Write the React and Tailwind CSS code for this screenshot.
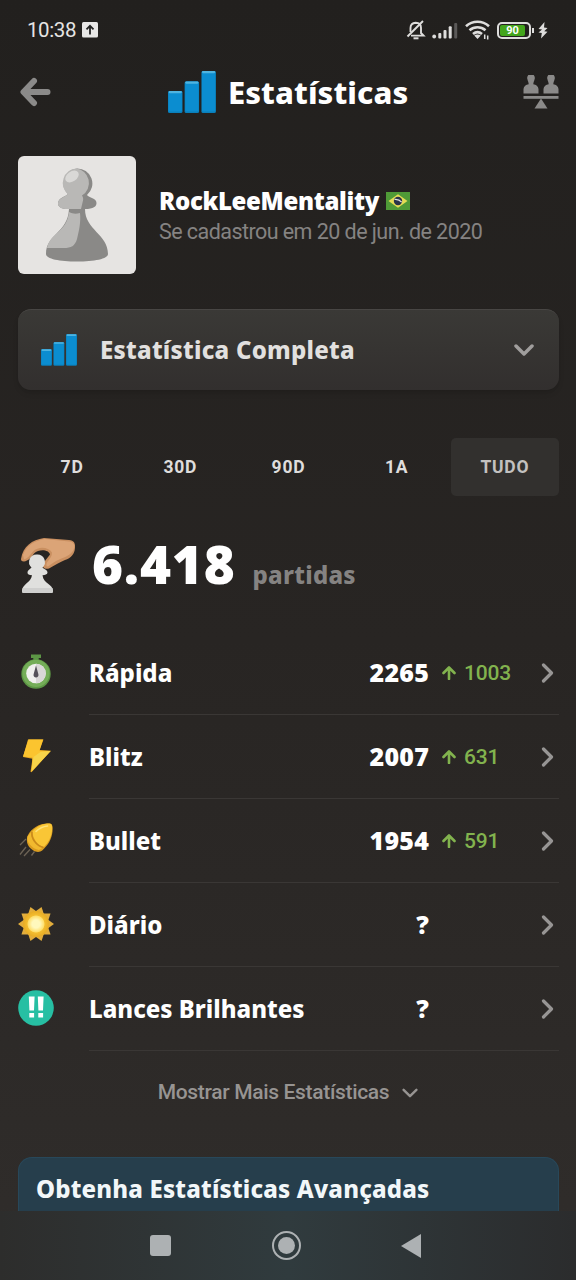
import React from 'react';

const PERIODS = ['7D', '30D', '90D', '1A', 'TUDO'];

const BarsIcon = ({ className }) => (
  <svg className={className} viewBox="0 0 48 42" fill="none">
    <rect x="0" y="20" width="14.5" height="22" rx="1.6" fill="#0a7fba" />
    <rect x="0.6" y="20" width="13.3" height="20.5" rx="1.3" fill="#0b8dd0" />
    <rect x="0.6" y="20" width="13.3" height="2.2" rx="1.1" fill="#4fb4e0" />
    <rect x="16.6" y="10.5" width="14.5" height="31.5" rx="1.6" fill="#0a7fba" />
    <rect x="17.2" y="10.5" width="13.3" height="30" rx="1.3" fill="#0b8dd0" />
    <rect x="17.2" y="10.5" width="13.3" height="2.2" rx="1.1" fill="#4fb4e0" />
    <rect x="33.4" y="0" width="14.5" height="42" rx="1.6" fill="#0a7fba" />
    <rect x="34" y="0" width="13.3" height="40.5" rx="1.3" fill="#0b8dd0" />
    <rect x="34" y="0" width="13.3" height="2.2" rx="1.1" fill="#4fb4e0" />
  </svg>
);

const RapidIcon = () => (
  <svg className="h-9 w-9" viewBox="0 0 36 36">
    <path d="M13 0.5h10v3.4h-2.3V7h-5.4V3.9H13z" fill="#5c9645" />
    <circle cx="18" cy="20" r="14.7" fill="#5c9645" />
    <circle cx="18" cy="19.3" r="13.6" fill="#74ad58" />
    <circle cx="18" cy="19.5" r="9.8" fill="#f0f0ee" />
    <path d="M18 9.7a9.8 9.8 0 0 1 0 19.6z" fill="#d9d7d7" />
    <path d="M18 11.5l2.4 8.8a2.5 2.5 0 1 1-4.8 0z" fill="#55515a" />
  </svg>
);

const BlitzIcon = () => (
  <svg className="h-9 w-9" viewBox="0 0 36 36">
    <path d="M10 1.500h15.500l-4 10.500 11.500.7-19.500 21.500-1-.5 2-13-9.500-1.700z" fill="#e5a623" />
    <path d="M10.500 1.500h14.500l-3.500 11.300 11 .2-19 20.500 1-14-9.500-.9z" fill="#fbc42f" />
    <path d="M15.500 19l7-5 10-1-19 20.500z" fill="#f7d44a" />
  </svg>
);

const BulletIcon = () => (
  <svg className="h-9 w-9" viewBox="0 0 36 36">
    <path d="M8 17L2 23M8 25l-6 7.500M12 27.500L6 34M16.500 29.500l-3 4" stroke="#6d6355" strokeWidth="1.3" />
    <path d="M9.500 14C14 5 23 .8 31.500 1.600c3 0 3.500 3 3 8-.8 7.500-4.500 14-10 18.600-3 2.500-6.500 2-9.500 0C10.500 25.500 7.500 20.500 9.500 14z" fill="#d99c20" />
    <path d="M14.500 9.500C19 4 25.500 1.500 31.500 1.600c2.600 0 3 3 2.500 7.500-.8 6.400-3.500 11.400-8 15.900C20 23.500 14.500 17 14.500 9.500z" fill="#f9c636" />
    <path d="M9.500 14.500c-1.500 5 4.500 12.500 11.500 13.500l3.500-2C17.500 23.500 12.500 17 13 10.500z" fill="#f1b92e" />
    <path d="M14 10c-1 6.500 4.500 14 11.500 15.500" stroke="#c98a1c" strokeWidth="1.3" fill="none" />
    <path d="M18 9.500c3-3 7-5 11.500-5.500" stroke="#fde27a" strokeWidth="1.5" strokeLinecap="round" fill="none" />
  </svg>
);

const DailyIcon = () => (
  <svg className="h-9 w-9" viewBox="0 0 36 36">
    <defs>
      <radialGradient id="sun">
        <stop offset="0.3" stopColor="#fff8bd" />
        <stop offset="0.62" stopColor="#ffdf6b" />
        <stop offset="0.68" stopColor="#f3bd30" />
        <stop offset="1" stopColor="#e7ab24" />
      </radialGradient>
    </defs>
    {[0, 36, 72, 108, 144, 180, 216, 252, 288, 324].map((angle) => (
      <path key={angle} d="M29 13L36 18l-7 5z" fill="#e2ad3c" transform={`rotate(${angle} 18 18)`} />
    ))}
    <circle cx="18" cy="18" r="13" fill="url(#sun)" />
  </svg>
);

const BrilliantIcon = () => (
  <svg className="h-9 w-9" viewBox="0 0 36 36">
    <circle cx="18" cy="18" r="17.8" fill="#27bfa3" />
    <path d="M10.800 6.500h5.800l-.6 14h-4.600zM19.800 6.500h5.800l-.6 14h-4.600z" fill="#fff" />
    <path d="M11.300 23h4.800v4.600h-4.800zM20.300 23h4.800v4.600h-4.800z" fill="#fff" />
  </svg>
);

const STATS = [
  { id: 'rapid', label: 'Rápida', icon: RapidIcon, rating: '2265', gain: '1003' },
  { id: 'blitz', label: 'Blitz', icon: BlitzIcon, rating: '2007', gain: '631' },
  { id: 'bullet', label: 'Bullet', icon: BulletIcon, rating: '1954', gain: '591' },
  { id: 'daily', label: 'Diário', icon: DailyIcon, rating: '?' },
  { id: 'brilliant', label: 'Lances Brilhantes', icon: BrilliantIcon, rating: '?' },
];

const StatusBar = () => (
  <div className="flex h-[60px] items-center justify-between pl-[27px] pr-[28px] text-[#e6e5e4]">
    <div className="flex items-center gap-[6px]">
      <span className="font-['Roboto'] text-[20.5px] leading-none tracking-[-0.4px]">10:38</span>
      <svg className="h-4 w-4" viewBox="0 0 16 16">
        <rect width="16" height="15.5" rx="1.5" fill="#e8e7e6" />
        <path d="M8 12.500V4M4.500 7.300L8 3.800l3.500 3.500" stroke="#222" strokeWidth="1.8" fill="none" />
      </svg>
    </div>
    <div className="flex items-center">
      <svg className="h-5 w-5" viewBox="0 0 20 20" fill="none" stroke="#dedddc" strokeWidth="1.9">
        <path d="M4.500 12V8c0-3.500 2-5 5.200-5.300C13.500 2.700 15 5 15 8v5l2.500 2.600H5" />
        <path d="M1.500 16.500L17 1" />
        <path d="M7.500 18.300h5" strokeWidth="2" />
      </svg>
      <svg className="ml-[6px] h-[17px] w-[26px]" viewBox="0 0 26 17" fill="#dedddc">
        <circle cx="2.2" cy="14.5" r="1.9" />
        <rect x="6.3" y="11" width="3" height="5.5" rx="1" />
        <rect x="11.5" y="8" width="3" height="8.5" rx="1" />
        <rect x="16.7" y="4.3" width="3" height="12.2" rx="1" />
        <rect x="22.2" y="1" width="3" height="15.5" rx="1" fill="#5b5958" />
      </svg>
      <svg className="ml-[7px] h-5 w-[25px]" viewBox="0 0 25 20" fill="none" stroke="#dedddc" strokeWidth="2.6">
        <path d="M1 6.200C7.500.3 17.500.3 24 6.200M4.500 10.200c4.700-4 11.300-4 16 0M8 14c2.700-2.300 6.300-2.300 9 0" />
        <path d="M9.200 15.600L12.500 19l3.300-3.400c-2-1.500-4.600-1.500-6.600 0z" fill="#dedddc" stroke="none" />
        <path d="M19.700 14.500v4.500M22.700 15.500v4" strokeWidth="1.5" />
      </svg>
      <div className="ml-[7px] flex h-[17px] w-[34px] rounded-[5px] border-2 border-[#dedddc] p-px">
        <div className="flex w-[25px] items-center justify-center rounded-[2px] bg-[#43a51c] font-['Roboto'] text-[11px] font-bold leading-none text-white">
          90
        </div>
      </div>
      <div className="ml-px h-[5px] w-[2px] bg-[#dedddc]" />
      <svg className="ml-1 h-[17px] w-[10px]" viewBox="0 0 10 17" fill="#dedddc">
        <path d="M6.500 0L.5 7l3.600.6L.5 10.500l3.300.5L3 16.500l6.500-6.800-3.300-.5L9.500 6 6 5.500z" />
      </svg>
    </div>
  </div>
);

const Header = () => (
  <div className="flex h-16 items-center justify-between pl-5 pr-[17px]">
    <svg className="h-[30px] w-[31px]" viewBox="0 0 31 30" fill="none" stroke="#8b8a89" strokeWidth="6" strokeLinecap="round" strokeLinejoin="round">
      <path d="M14 4L3.500 15 14 26M4 15h23.500" />
    </svg>
    <div className="flex items-center gap-3">
      <BarsIcon className="h-[42px] w-12" />
      <h1 className="w-[178px] whitespace-nowrap font-['Noto_Sans'] text-[31px] font-extrabold leading-none tracking-[0.07px] text-white">Estatísticas</h1>
    </div>
    <svg className="h-[34px] w-9" viewBox="0 0 36 34" fill="#8b8a89">
      <path d="M4.500 4.500a3.800 4 0 1 1 7 0c-.3 1.700-1.200 3-1.200 4.800 2.800.6 5 2 5.200 4.700v4.500H.5V14c.2-2.700 2.400-4.100 5.200-4.700 0-1.800-.9-3.100-1.200-4.800zM24.500 4.500a3.800 4 0 1 1 7 0c-.3 1.700-1.200 3-1.200 4.800 2.800.6 5 2 5.200 4.700v4.500h-15V14c.2-2.700 2.400-4.100 5.200-4.700 0-1.800-.9-3.100-1.200-4.800z" />
      <rect x="0.5" y="21" width="35" height="2.8" />
      <path d="M18 23.500l6.500 10h-13z" />
    </svg>
  </div>
);

const Avatar = () => (
  <div className="flex h-[118px] w-[118px] shrink-0 justify-center rounded-[6px] bg-[#e6e4e2]">
    <svg className="mt-[12px] h-[95px] w-[64px]" viewBox="0 0 64 95">
      <path d="M32 0.500A15 15 0 0 1 42 27c2 3 9.500 3 9.500 8 0 3.500-3 6-11.500 6C40 62 63 66 63 86c0 5-14 7.500-31 7.500S1 91 1 86c0-20 22-21 23-45-8 0-11-2-11-5.500C13 30 20 29 23 26a15 15 0 0 1 9-25.500z" fill="#8a8987" />
      <path d="M31 0.500a14 14.500 0 0 1 6 27c1 2 1.500 3 1 5l-2 8.500H23c-7 0-10-2-10-5.500 0-5 7-6.500 10-9.500a14.500 14.500 0 0 1 8-25.500z" fill="#b9b8b6" />
      <path d="M24 44c4 2 7 2 11 1 1 9-1 18-3 26-2 7-6 9-13 9H2C5 65 22 64 24 44z" fill="#b9b8b6" />
      <ellipse cx="27" cy="8.5" rx="7.5" ry="5" fill="#d9d8d6" transform="rotate(-35 27 8.5)" />
    </svg>
  </div>
);

const BrazilFlag = () => (
  <svg className="h-[18px] w-6" viewBox="0 0 24 18">
    <rect width="24" height="18" fill="#4f9a37" />
    <path d="M12 2.300L21.500 9 12 15.700 2.500 9z" fill="#e4dc55" />
    <circle cx="12" cy="9" r="4.2" fill="#29334a" />
    <path d="M8.500 7.500c2.800-.3 5.500.8 7.200 2.700" stroke="#dfe3df" strokeWidth="1.2" fill="none" />
  </svg>
);

const HandPawnIcon = () => (
  <svg className="h-[57px] w-[57px]" viewBox="0 0 57 57">
    <path d="M1 22C3 9 12 3 24 1l25 2c5 .5 6.500 3 6 8-.5 6-4 10-10 12-5 2-10 5-16 8.500-4 1-7.500-1-6-5l7-9c-1-5-11-6-16-1C12 20 8 24 4 24.500c-2.500 0-3-1-3-2.500z" fill="#c98f60" />
    <path d="M3 18C7 8 14 4 25 2l24 2.500c5 .5 6 3 5 7-1 4-5 7-10 9-6 2-11 5-16 9-2 0-2-2-1-4 3-4 5-6 5-10-4-6-14-6-19-1-3 4-6 7-9 8z" fill="#dba477" />
    <path d="M17 17.500a7.500 7.500 0 0 1 5.500 13c1 1.500 5 2 5 5 0 1.800-2.500 2.500-5 2.800C23.500 47 33 47 33 54c0 1.500-.5 2-2 2H4c-1.500 0-2-.5-2-2 0-7 9-8 10-15.700-3-.3-4.500-1-4.500-2.800 0-2.500 3-3.500 4-5a7.500 7.500 0 0 1 5.500-13z" fill="#e0e0de" />
    <path d="M3 51h29.500l.5 3c0 1.500-.5 2-2 2H4c-1.500 0-2-.5-2-2z" fill="#cfcfce" />
  </svg>
);

const ChevronDown = ({ className }) => (
  <svg className={className} viewBox="0 0 20 12" fill="none" stroke="currentColor" strokeLinecap="round" strokeLinejoin="round">
    <path d="M2 2l8 8 8-8" />
  </svg>
);

const StatRow = ({ stat }) => {
  const Icon = stat.icon;

  return (
    <div className="flex h-[84px] items-center">
      <div className="w-[71px] pb-[2px]">
        <Icon />
      </div>
      <div className="flex h-full flex-1 items-center border-b border-[#3a3735]">
        <span className="flex-1 whitespace-nowrap font-['Noto_Sans'] text-[24px] font-extrabold leading-none text-white">{stat.label}</span>
        <span className="font-['Noto_Sans'] text-[25px] font-black leading-none tracking-[0.2px] text-white">{stat.rating}</span>
        <div className="flex w-[112px] items-center gap-2 pl-[13px] pt-[2px] text-[#82b34e]">
          {stat.gain && (
            <>
              <svg className="mb-[2px] h-[14px] w-[14px]" viewBox="0 0 14 14" fill="none" stroke="currentColor" strokeWidth="2.6" strokeLinecap="round" strokeLinejoin="round">
                <path d="M7 13V2M1.500 7L7 1.500 12.500 7" />
              </svg>
              <span className="font-['Roboto'] text-[21px] font-medium leading-none tracking-[-0.2px]">{stat.gain}</span>
            </>
          )}
        </div>
        <svg className="mr-[5px] h-5 w-[13px]" viewBox="0 0 13 20" fill="none" stroke="#979594" strokeWidth="3.2" strokeLinecap="round" strokeLinejoin="round">
          <path d="M2.500 2l8 8-8 8" />
        </svg>
      </div>
    </div>
  );
};

export default function App() {
  return (
    <div className="flex h-[1280px] w-[576px] flex-col overflow-hidden bg-linear-to-b from-[#22201e] via-[#282523] to-[#302d2b]">
      <StatusBar />
      <Header />

      <div className="mt-8 flex gap-[23px] pl-[18px]">
        <Avatar />
        <div className="pt-8">
          <div className="flex items-center gap-[7px]">
            <span className="font-['Noto_Sans'] text-[24px] font-black leading-[26px] tracking-[-0.33px] text-white">RockLeeMentality</span>
            <BrazilFlag />
          </div>
          <p className="mt-[5px] font-['Roboto'] text-[21.5px] leading-[26px] tracking-[-0.55px] text-[#858382]">Se cadastrou em 20 de jun. de 2020</p>
        </div>
      </div>

      <div className="ml-[18px] mr-[17px] mt-[35px] flex h-[81px] shrink-0 items-center rounded-[13px] border-t border-[#484644] bg-linear-to-b from-[#3a3936] to-[#322f2e] pl-[23px] pr-6 shadow-md">
        <BarsIcon className="h-8 w-9" />
        <span className="ml-[23px] flex-1 font-['Noto_Sans'] text-[24px] font-extrabold leading-none tracking-[0.25px] text-[#e2e0df]">Estatística Completa</span>
        <ChevronDown className="h-3 w-[22px] stroke-[3.5] text-[#a09e9d]" />
      </div>

      <div className="ml-[18px] mr-[17px] mt-12 flex h-[58px] shrink-0">
        {PERIODS.map((period) => (
          <div
            key={period}
            className={`flex flex-1 items-center justify-center rounded-[5px] pt-px font-['Roboto'] text-[17.5px] font-bold tracking-[0.8px] ${
              period === 'TUDO' ? 'bg-[#32302e] text-[#c3c1c0]' : 'text-[#dfdddc]'
            }`}
          >
            {period}
          </div>
        ))}
      </div>

      <div className="mt-[41px] flex h-[57px] shrink-0 pl-5">
        <HandPawnIcon />
        <div className="ml-[15px] flex items-baseline gap-[17px]">
          <span className="font-['Noto_Sans'] text-[53px] font-black leading-[53px] tracking-[0.8px] text-white">6.418</span>
          <span className="font-['Noto_Sans'] text-[24px] font-extrabold leading-none tracking-[0.25px] text-[#858382]">partidas</span>
        </div>
      </div>

      <div className="ml-[18px] mr-[17px] mt-[37px] shrink-0">
        {STATS.map((stat) => (
          <StatRow key={stat.id} stat={stat} />
        ))}
      </div>

      <div className="flex h-[83px] shrink-0 items-center justify-center gap-[13px] text-[#979492]">
        <span className="font-['Roboto'] text-[21px] font-medium leading-none tracking-[-0.33px]">Mostrar Mais Estatísticas</span>
        <ChevronDown className="h-[10px] w-4 stroke-3" />
      </div>

      <div className="ml-[18px] mr-[17px] mt-[23px] h-[54px] shrink-0 rounded-t-[14px] border-x border-t border-[#28485a] bg-[#263e4c] pl-[17px] pt-[18px]">
        <h2 className="whitespace-nowrap font-['Noto_Sans'] text-[24px] font-extrabold leading-[26px] tracking-[0.17px] text-[#f2f7f9]">Obtenha Estatísticas Avançadas</h2>
      </div>

      <div className="flex h-[69px] shrink-0 items-center bg-linear-to-r from-[#2d2d2c] via-[#303b3e] to-[#2b2c2d] pl-[150px]">
        <div className="h-[21px] w-[21px] rounded-[3px] bg-[#adb1b3]" />
        <div className="ml-[101px] flex h-[29px] w-[29px] items-center justify-center rounded-full border-2 border-[#adb1b3]">
          <div className="h-[17px] w-[17px] rounded-full bg-[#adb1b3]" />
        </div>
        <svg className="ml-[100px] h-6 w-5" viewBox="0 0 20 24" fill="#adb1b3">
          <path d="M20 0v24L0 12z" />
        </svg>
      </div>
    </div>
  );
}
